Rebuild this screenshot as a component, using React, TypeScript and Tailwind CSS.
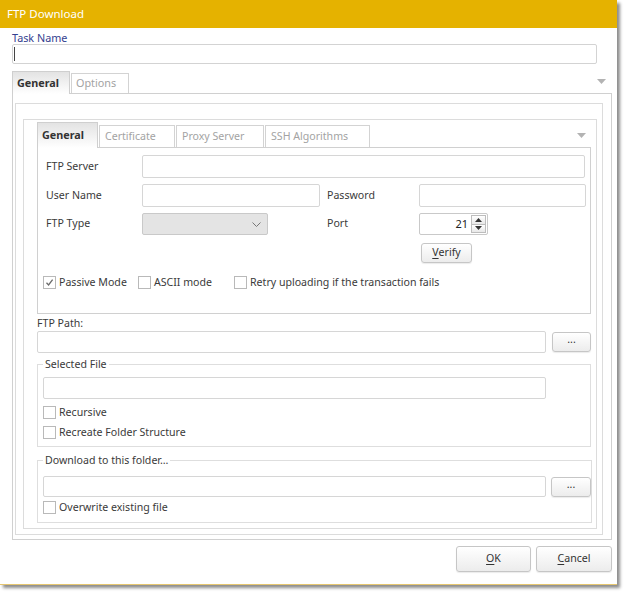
import React from 'react';

const FONT = "font-['Noto_Sans',_'Open_Sans',_sans-serif]";

function Field({ className = '' }: { className?: string }) {
  return <div className={`shrink-0 rounded-[2px] border border-[#d6d6d6] bg-white ${className}`} />;
}

function Check({ checked = false, label, className = '' }: { checked?: boolean; label: string; className?: string }) {
  return (
    <div className={`flex h-[14px] items-center ${className}`}>
      <div className="flex h-[13px] w-[13px] shrink-0 items-center justify-center border border-[#b9b9b9] bg-white">
        {checked && (
          <svg width="9" height="9" viewBox="0 0 9 9">
            <path d="M1.5 4.8 L3.6 7 L7.6 1.6" fill="none" stroke="#6b6b6b" strokeWidth="1.3" />
          </svg>
        )}
      </div>
      <span className="ml-[3px] text-[10.6px] leading-[14px] text-[#3a3a3a]">{label}</span>
    </div>
  );
}

function Btn({ children, className = '' }: { children: React.ReactNode; className?: string }) {
  return (
    <div
      className={`flex shrink-0 items-center justify-center rounded-[3px] border border-[#c6c6c6] bg-gradient-to-b from-white to-[#ececec] text-[10.6px] text-[#333] shadow-[0_1px_1px_rgba(0,0,0,0.08)] ${className}`}
    >
      {children}
    </div>
  );
}

function Arrow({ className = '' }: { className?: string }) {
  return (
    <svg className={className} width="9" height="5" viewBox="0 0 9 5">
      <path d="M0 0 L9 0 L4.5 5 Z" fill="#b3b3b3" />
    </svg>
  );
}

function Legend({ children }: { children: React.ReactNode }) {
  return <legend className="px-[2px] text-[10.6px] leading-[14px] text-[#3a3a3a]">{children}</legend>;
}

export default function App() {
  return (
    <div className={`h-[595px] w-[627px] bg-white ${FONT}`}>
      <div className="flex h-[585px] w-[617px] flex-col border-b border-[#e6c670] bg-white shadow-[3px_3px_3px_rgba(0,0,0,0.45)]">
        <div className="flex h-[28px] shrink-0 items-center bg-[#e5b200] pl-[7px] text-[11.5px] text-white">FTP Download</div>

        <div className="flex flex-col px-[12px]">
          <div className="mt-[3px] h-[13px] text-[10.8px] leading-[13px] text-[#34408f]">Task Name</div>
          <div className="flex h-[20px] w-[585px] items-center rounded-[2px] border border-[#d3d3d3] pl-[1px]">
            <div className="h-[14px] w-px bg-[#444]" />
          </div>

          {/* outer tabs */}
          <div className="mt-[6px] flex h-[24px] w-[600px] items-end gap-[1px] border-b border-[#d0d0d0]">
            <div className="relative -mb-px flex h-[23px] w-[58px] items-start border border-b-0 border-[#cfcfcf] bg-gradient-to-b from-[#e3e3e3] to-white pl-[4px] pt-[3px] text-[10.8px] font-bold text-[#333]">
              General
            </div>
            <div className="flex h-[20px] w-[58px] items-center border border-b-0 border-[#d3d3d3] pl-[4px] text-[10.8px] text-[#a3a3a3]">
              Options
            </div>
            <Arrow className="mb-[9px] ml-auto mr-[6px]" />
          </div>

          <div className="flex h-[446px] w-[600px] flex-col border-x border-b border-[#d0d0d0]">
            <div className="ml-[2px] mt-[9px] flex h-[432px] w-[588px] flex-col border border-[#dcdcdc]">
              <div className="ml-[7px] mt-[15px] flex h-[410px] w-[574px] flex-col border border-[#dcdcdc]">
                <div className="ml-[13px] mt-[2px] flex w-[554px] flex-col">
                  {/* inner tabs */}
                  <div className="flex h-[26px] items-end gap-[1px] border-b border-[#d0d0d0]">
                    <div className="relative -mb-px flex h-[26px] w-[61px] items-start border border-b-0 border-[#cfcfcf] bg-gradient-to-b from-[#e3e3e3] to-white pl-[4px] pt-[4px] text-[10.8px] font-bold text-[#333]">
                      General
                    </div>
                    {[
                      ['Certificate', 'w-[76px]'],
                      ['Proxy Server', 'w-[88px]'],
                      ['SSH Algorithms', 'w-[105px]'],
                    ].map(([t, w]) => (
                      <div key={t} className={`flex h-[22px] ${w} items-center border border-b-0 border-[#d3d3d3] pl-[5px] text-[10.6px] text-[#a3a3a3]`}>
                        {t}
                      </div>
                    ))}
                    <Arrow className="mb-[9px] ml-auto mr-[5px]" />
                  </div>

                  <div className="flex h-[166px] flex-col border-x border-b border-[#d0d0d0] text-[10.6px] text-[#3a3a3a]">
                    <div className="ml-[8px] mt-[7px] flex h-[23px] items-center">
                      <span className="w-[96px] shrink-0">FTP Server</span>
                      <Field className="h-[23px] w-[443px]" />
                    </div>
                    <div className="ml-[8px] mt-[6px] flex h-[23px] items-center">
                      <span className="w-[96px] shrink-0">User Name</span>
                      <Field className="h-[23px] w-[178px]" />
                      <span className="ml-[7px] w-[92px] shrink-0">Password</span>
                      <Field className="h-[23px] w-[167px]" />
                    </div>
                    <div className="ml-[8px] mt-[6px] flex h-[22px] items-center">
                      <span className="w-[96px] shrink-0">FTP Type</span>
                      <div className="flex h-[22px] w-[126px] shrink-0 items-center justify-end rounded-[2px] border border-[#c9c9c9] bg-[#e4e4e4] pr-[6px]">
                        <svg width="9" height="5" viewBox="0 0 9 5">
                          <path d="M0.5 0.5 L4.5 4.5 L8.5 0.5" fill="none" stroke="#777" strokeWidth="1" />
                        </svg>
                      </div>
                      <span className="ml-[59px] w-[92px] shrink-0">Port</span>
                      <div className="flex h-[22px] w-[69px] shrink-0 items-center justify-end rounded-[2px] border border-[#c9c9c9] bg-white pr-[1px]">
                        <span className="mr-[3px] text-[11px] text-[#222]">21</span>
                        <div className="flex h-[18px] w-[15px] flex-col border border-[#bdbdbd]">
                          <div className="flex flex-1 items-center justify-center border-b border-[#bdbdbd] bg-gradient-to-b from-white to-[#e8e8e8]">
                            <svg width="7" height="4" viewBox="0 0 7 4">
                              <path d="M0 4 L7 4 L3.5 0 Z" fill="#333" />
                            </svg>
                          </div>
                          <div className="flex flex-1 items-center justify-center bg-gradient-to-b from-white to-[#e8e8e8]">
                            <svg width="7" height="4" viewBox="0 0 7 4">
                              <path d="M0 0 L7 0 L3.5 4 Z" fill="#333" />
                            </svg>
                          </div>
                        </div>
                      </div>
                    </div>
                    <div className="ml-[383px] mt-[8px] flex">
                      <Btn className="h-[20px] w-[51px]">
                        <span className="underline underline-offset-2">V</span>erify
                      </Btn>
                    </div>
                    <div className="ml-[5px] mt-[12px] flex items-center">
                      <Check checked label="Passive Mode" className="w-[95px]" />
                      <Check label="ASCII mode" className="w-[96px]" />
                      <Check label="Retry uploading if the transaction fails" />
                    </div>
                  </div>

                  <div className="mt-[1px] h-[16px] text-[10.6px] leading-[16px] text-[#3a3a3a]">FTP Path:</div>
                  <div className="flex h-[22px] items-center">
                    <Field className="h-[22px] w-[509px]" />
                    <Btn className="ml-[6px] h-[20px] w-[39px] pb-[4px] text-[#5a6478]">...</Btn>
                  </div>

                  <fieldset className="mt-[4px] w-[554px] border border-[#dedede] pb-[7px] pl-[5px]">
                    <Legend>Selected File</Legend>
                    <Field className="mt-[6px] h-[22px] w-[503px]" />
                    <Check label="Recursive" className="mt-[6px]" />
                    <Check label="Recreate Folder Structure" className="mt-[6px]" />
                  </fieldset>

                  <fieldset className="mt-[6px] w-[554px] border border-[#dedede] pb-[8px] pl-[5px]">
                    <Legend>Download to this folder…</Legend>
                    <div className="mt-[9px] flex h-[21px] items-center">
                      <Field className="h-[21px] w-[503px]" />
                      <Btn className="ml-[5px] h-[20px] w-[40px] pb-[4px] text-[#5a6478]">...</Btn>
                    </div>
                    <Check label="Overwrite existing file" className="mt-[3px]" />
                  </fieldset>
                </div>
              </div>
            </div>
          </div>

          <div className="mt-[6px] flex w-[600px] justify-end gap-[5px]">
            <Btn className="h-[26px] w-[75px]">
              <span className="underline underline-offset-2">O</span>K
            </Btn>
            <Btn className="h-[26px] w-[76px]">
              <span className="underline underline-offset-2">C</span>ancel
            </Btn>
          </div>
        </div>
      </div>
    </div>
  );
}
